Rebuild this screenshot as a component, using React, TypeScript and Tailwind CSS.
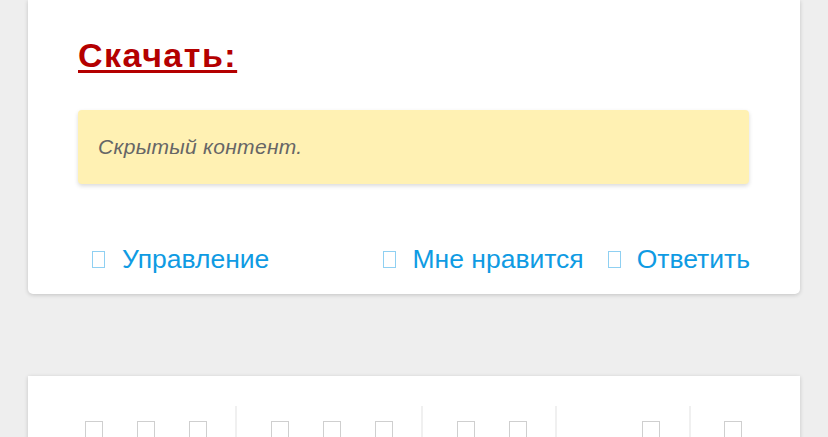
import React from 'react';

const Tofu = ({ className }: { className: string }) => (
  <span className={`inline-block shrink-0 border ${className}`} />
);

const ToolCell = () => (
  <div className="w-[52px] flex justify-center">
    <Tofu className="w-[18px] h-[26px] border-[#cfcfcf]" />
  </div>
);

const Sep = () => <div className="w-[2px] self-stretch bg-[#f0f0f0]" />;

const App = () => {
  return (
    <div className="min-h-screen bg-[#eeeeee] font-['Liberation_Sans',Arial,sans-serif] overflow-hidden">
      <div className="mx-[28px] bg-white rounded-b-[5px] shadow-[0_1px_4px_rgba(0,0,0,0.18)] pt-[35px] pb-[18px] px-[50px]">
        <h2 className="text-[34px] leading-[40px] font-bold text-[#b40000] underline decoration-[3px] underline-offset-[3px] tracking-[1.5px]">
          Скачать:
        </h2>

        <div className="mt-[35px] mr-[1px] bg-[#fff1b3] rounded-[4px] shadow-[0_2px_4px_rgba(0,0,0,0.15)] h-[74px] flex items-center px-[20px]">
          <span className="italic text-[21px] tracking-[0.3px] text-[#666666]">Скрытый контент.</span>
        </div>

        <div className="mt-[58px] flex items-center text-[26.5px] leading-[34px] text-[#0f9be3]">
          <a className="flex items-center ml-[14px]">
            <Tofu className="w-[13px] h-[17px] border-[#8fd0f2] mr-[17px]" />
            <span>Управление</span>
          </a>
          <div className="flex-1" />
          <a className="flex items-center">
            <Tofu className="w-[13px] h-[17px] border-[#8fd0f2] mr-[16px]" />
            <span>Мне нравится</span>
          </a>
          <a className="flex items-center ml-[24px]">
            <Tofu className="w-[13px] h-[17px] border-[#8fd0f2] mr-[16px]" />
            <span>Ответить</span>
          </a>
        </div>
      </div>

      <div className="mx-[28px] mt-[82px] bg-white shadow-[0_1px_4px_rgba(0,0,0,0.18)] pl-[40px] pt-[30px] h-[120px]">
        <div className="flex h-full">
          <div className="flex pt-[15px] pr-[11px]">
            <ToolCell />
            <ToolCell />
            <ToolCell />
          </div>
          <Sep />
          <div className="flex pt-[15px] pl-[17px] pr-[11px]">
            <ToolCell />
            <ToolCell />
            <ToolCell />
          </div>
          <Sep />
          <div className="flex pt-[15px] pl-[17px] pr-[11px]">
            <ToolCell />
            <ToolCell />
          </div>
          <Sep />
          <div className="flex pt-[15px] pl-[68px] pr-[12px]">
            <ToolCell />
          </div>
          <Sep />
          <div className="flex pt-[15px] pl-[16px]">
            <ToolCell />
          </div>
        </div>
      </div>
    </div>
  );
};

export default App;
